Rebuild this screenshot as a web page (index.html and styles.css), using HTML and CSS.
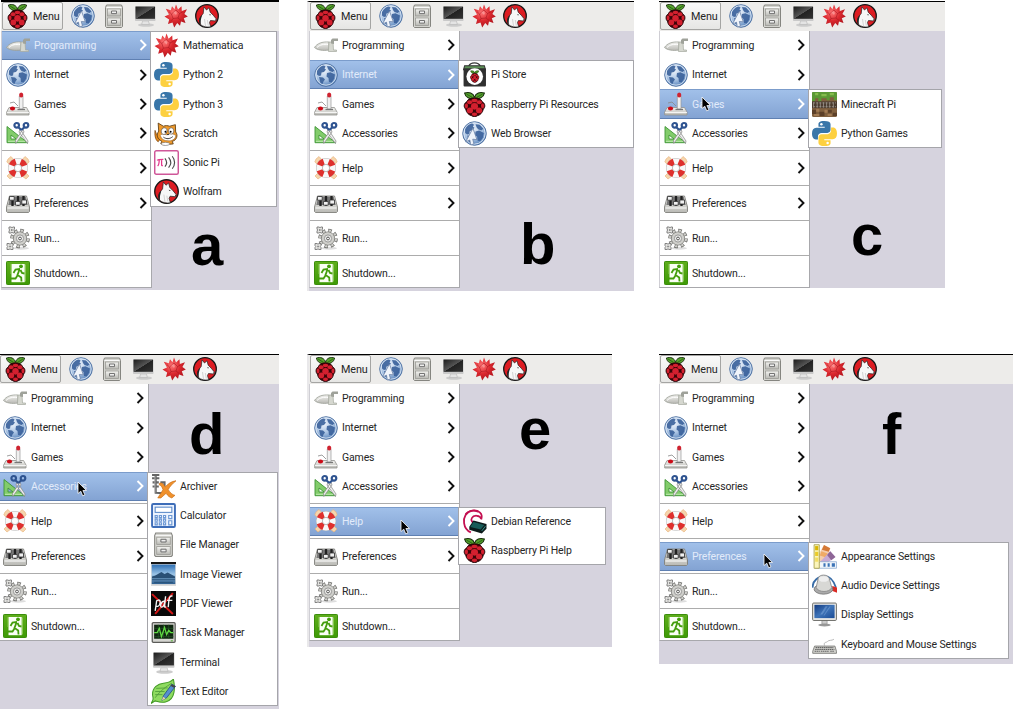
FILE: index.html
```html
<!DOCTYPE html>
<html lang="en">
<head>
<meta charset="utf-8">
<title>Raspberry Pi desktop menus</title>
<link rel="stylesheet" href="styles.css">
</head>
<body>
<svg class="sprite" aria-hidden="true">
<defs>
<radialGradient id="gGlobe" cx=".4" cy=".3" r=".7"><stop offset="0" stop-color="#f0f5fc"/><stop offset=".6" stop-color="#a9c3e3"/><stop offset="1" stop-color="#5c86bc"/></radialGradient>
<linearGradient id="gMetal" x2="0" y2="1"><stop offset="0" stop-color="#f4f4f1"/><stop offset="1" stop-color="#b9b9b4"/></linearGradient>
<linearGradient id="gScreen" x2="1" y2="1"><stop offset="0" stop-color="#1b1b1b"/><stop offset=".5" stop-color="#555"/><stop offset=".52" stop-color="#222"/><stop offset="1" stop-color="#333"/></linearGradient>
<linearGradient id="gBlue" x2="1" y2="1"><stop offset="0" stop-color="#123a80"/><stop offset=".5" stop-color="#3f74b8"/><stop offset="1" stop-color="#1b4c96"/></linearGradient>
<radialGradient id="gBurst" cx=".4" cy=".35" r=".7"><stop offset="0" stop-color="#f77"/><stop offset=".5" stop-color="#dc2a30"/><stop offset="1" stop-color="#a80f18"/></radialGradient>
<linearGradient id="gGreen" x2="0" y2="1"><stop offset="0" stop-color="#5fae1c"/><stop offset="1" stop-color="#3e9a06"/></linearGradient>
<linearGradient id="gSky" x2="0" y2="1"><stop offset="0" stop-color="#2d6fb4"/><stop offset=".5" stop-color="#9cc4e6"/><stop offset="1" stop-color="#2b5c8c"/></linearGradient>
<symbol id="raspberry" viewBox="1 0 22 23.5" preserveAspectRatio="none">
<path d="M12 6C8 7 4 5 3.300 1 7-.3 11 .8 12 5 13 .8 17-.3 20.700 1 20 5 16 7 12 6z" fill="#55a32c" stroke="#172b0c" stroke-width=".9"/>
<path d="M5 2l5 3M19 2l-5 3" stroke="#1f4d12" stroke-width=".7"/>
<path d="M12 5.500c3 0 6 1 7 4 2.500 1 2.700 5 .8 6.500-.5 3.500-3.300 6-5.300 6.300-1.500 1.300-3.500 1.300-5 0C7.500 22 4.700 19.500 4.200 16 2.300 14.500 2.500 10.500 5 9.500c1-3 4-4 7-4z" fill="#3a0408" stroke="#2a0508" stroke-width=".8"/>
<g fill="#d3202f"><ellipse cx="12" cy="8" rx="2.700" ry="1.700"/><ellipse cx="7.700" cy="9.600" rx="2.300" ry="1.900"/><ellipse cx="16.300" cy="9.600" rx="2.300" ry="1.900"/><circle cx="12" cy="13.500" r="3.100"/><ellipse cx="4.900" cy="13" rx="1.400" ry="2.400"/><ellipse cx="19.100" cy="13" rx="1.400" ry="2.400"/><circle cx="8" cy="17.300" r="2.700"/><circle cx="16" cy="17.300" r="2.700"/><ellipse cx="12" cy="20.900" rx="2.400" ry="1.600"/></g>
</symbol>
<symbol id="globe" viewBox="0 0 24 24">
<circle cx="12" cy="12" r="11.300" fill="url(#gGlobe)" stroke="#4a6d9f" stroke-width=".9"/>
<circle cx="12" cy="12" r="10.200" fill="none" stroke="#e4edf8" stroke-width=".8"/>
<path d="M3 8c2-4 5-5.500 7-5.500l1.500 1-1 2 1.500 1-2 2.500-2.500.5-.5 3-2 .5-2-1.500zM5 14l4 .5 2 2-1.500 2-1 2.500-2-1zM13 3l4 .5 3.500 4-2 1.500-3-1-1.500-2zM13 10l3.500-.8 4.500 2.300-1 4.500-2.500 3.500-2.500-.5-.5-4-2-1.500z" fill="#3a619a" opacity=".9"/>
</symbol>
<symbol id="browser" viewBox="0 0 24 24"><use href="#globe"/><path d="M10.500 7L3.500 20l4-1.800.8 4.800 3.200-1-1.200-4.500 4 .3z" fill="#f0f4fa" stroke="#6d84a8" stroke-width=".8"/></symbol>
<symbol id="cabinet" viewBox="0 0 24 24">
<path d="M4.500 1h15l1 2.500v19l-1 1h-15l-1-1v-19z" fill="#d4d4cf" stroke="#858580"/>
<path d="M4.500 3.500h15" stroke="#fafafa"/>
<rect x="5.500" y="5" width="13" height="7" fill="url(#gMetal)" stroke="#9b9b96" stroke-width=".8"/><rect x="5.500" y="14" width="13" height="7.500" fill="url(#gMetal)" stroke="#9b9b96" stroke-width=".8"/>
<path d="M9.500 7h5v2.600h-5zM9.500 16.500h5v2.600h-5z" fill="#eee" stroke="#666" stroke-width=".9"/>
</symbol>
<symbol id="monitor" viewBox="0 0 24 24">
<ellipse cx="13" cy="21" rx="8" ry="1.800" fill="#ccc"/><path d="M9.500 17h6l.8 3.500h-7.600z" fill="#e4e4e4" stroke="#b5b5b5" stroke-width=".6"/>
<rect x="2" y="2.500" width="20.500" height="14.500" rx=".8" fill="#c9c9c9"/><rect x="2.500" y="2.500" width="19.500" height="12.300" fill="url(#gScreen)"/>
</symbol>
<symbol id="burst" viewBox="0 0 24 24">
<path d="M12 .5l2 5 3.500-3.200.3 4.700 5.200-1.700-2.600 4.700 3.400 2.600-4 1.600 1.700 4.800-4.500-1.500-1 4.300-2.800-2.800-3 4.500-1.700-5-4.500 1.500 1.200-4.500L.5 12.500l4.500-2L1.800 4.700l5 1.500L8 2.300l2.500 3z" fill="url(#gBurst)"/>
<path d="M12 6l3.500 3.500L14 14l-5 .5L7.500 10zM15.500 9.500l3-1.500M14 14l3 2.400M9 14.500l-1.500 2.300M7.500 10L5 7.700" fill="none" stroke="#9e101b" stroke-width=".5"/><path d="M9.500 8.500l2-1.500 1.500 2-1 2z" fill="#fa9090"/>
</symbol>
<symbol id="wolf" viewBox="0 0 24 24">
<circle cx="12" cy="12" r="11.300" fill="#dd1c22" stroke="#181818" stroke-width="1.300"/>
<path d="M9 2.800L11.500 6 14 3.800l1.200 4.400 3 3 3.300 4-1 1.800-5-.5-1 2 1.200 4.300C12 23.500 8 22.800 5.500 20.500 4 17 5 13 8.200 9.500z" fill="#f7f7f7" stroke="#222" stroke-width=".7"/>
<path d="M5.500 20.500C2.800 17.500 4 13 7 11L5.800 16zM14 10.200l2.200.5-1.200.8zM20 15.200l1.500.2-.6 1.200z" fill="#252525"/><path d="M9.500 15l1 7M12.300 16l1 5.500" stroke="#bbb" stroke-width=".6"/>
</symbol>
<symbol id="programming" viewBox="0 0 24 24">
<path d="M.5 14.500C3 10.500 8 8.500 15 9v8c-6 1-12 0-14.500-2.500z" fill="url(#gMetal)" stroke="#9a9e95" stroke-width=".8"/><path d="M3 14.500c3-3 7-3.500 11-3" stroke="#fff" fill="none"/>
<path d="M15 9h4l.5 8h3v1.500h-8V17z" fill="#d6d8d0" stroke="#a5a99f" stroke-width=".7"/><path d="M17 10.500V7l1.500-1.500H24V8h-4v3z" fill="#9fa29a"/>
</symbol>
<symbol id="games" viewBox="0 0 24 24">
<path d="M3 15.500h17.500L23 20v3H.7v-3z" fill="url(#gMetal)" stroke="#92928e" stroke-width=".8"/><path d="M1 20.500h22" stroke="#fff" stroke-width=".8"/>
<path d="M13.300 17V4h3.700v13z" fill="#f0f0f0" stroke="#999" stroke-width=".7"/><ellipse cx="15.200" cy="3" rx="2.100" ry="2.600" fill="#cf2330"/><path d="M11.500 17.500h7.500" stroke="#777" stroke-width="1.300"/><ellipse cx="6.500" cy="16.500" rx="2.600" ry="1.900" fill="#cc0b17"/><path d="M4 11l4-1 4 4" fill="none" stroke="#888" stroke-width=".8"/>
</symbol>
<symbol id="accessories" viewBox="0 0 24 24">
<path d="M1 5.500v16.200h20.500zM5 14v4h5z" fill="#82cc6b" fill-rule="evenodd" stroke="#3e9436" stroke-width=".9"/><path d="M2 20.300h17" stroke="#bfeab0"/>
<path d="M14 8l8 12-.5 2.500L13 11zM17 8L9.500 19.500l.3 3L18 11z" fill="#eee" stroke="#858585" stroke-width=".7"/>
<g fill="none" stroke="#2e5390" stroke-width="2.200"><circle cx="10.700" cy="4.300" r="2.300"/><circle cx="20" cy="4.300" r="2.300"/><path d="M12 6l3.400 3M18.700 6l-3.400 3"/></g>
</symbol>
<symbol id="help" viewBox="0 0 24 24">
<path d="M2 3l3-2.500L20 17l3 3-3 3-4-3L.8 6zM22 3l-3-2.500L4 17l-3 3 3 3 4-3L23.200 6z" fill="#f6d5ac" stroke="#e7b279" stroke-width=".6"/>
<circle cx="12" cy="12" r="6.800" fill="#fff" stroke="#b9b9b9" stroke-width="6.600"/><circle cx="12" cy="12" r="6.800" fill="none" stroke="#f8f8f8" stroke-width="5.600"/>
<circle cx="12" cy="12" r="6.800" fill="none" stroke="#df302d" stroke-width="6" stroke-dasharray="5.700 4.980" stroke-dashoffset="-2.490"/><circle cx="12" cy="12" r="3.600" fill="#fff" stroke="#999" stroke-width=".6"/>
</symbol>
<symbol id="preferences" viewBox="0 0 24 24">
<path d="M3.500 5h17l3 11v4.500l-1 1h-21l-1-1V16z" fill="url(#gMetal)" stroke="#80807c" stroke-width=".9"/><path d="M4.300 5.500h15.400l2 8.500H2.300z" fill="#777"/>
<path d="M6.500 5v10M12 5v10M17.500 5v10" stroke="#202020" stroke-width="2.300"/><g fill="#f1f1f1" stroke="#333" stroke-width=".8"><path d="M3.500 5.500h4.700v3.700H3.500zM9.500 10.500h4.700v3.700H9.500zM15.800 9h4.700v4h-4.700z"/></g><path d="M1.500 17h21" stroke="#fff"/>
</symbol>
<symbol id="run" viewBox="0 0 24 24">
<ellipse cx="15" cy="22.300" rx="8" ry="1.500" fill="#ddd"/>
<circle cx="14" cy="12.500" r="8" fill="none" stroke="#6c6c69" stroke-width="3.600" stroke-dasharray="3.400 2.883"/><circle cx="14" cy="12.500" r="7.800" fill="none" stroke="#cfcfcb" stroke-width="2.600" stroke-dasharray="2.200 3.926" stroke-dashoffset="-.5"/>
<circle cx="14" cy="12.500" r="6.600" fill="#ccccc8" stroke="#747470" stroke-width=".8"/><circle cx="14" cy="12.500" r="6" fill="#cfcfcb"/><circle cx="14" cy="12.500" r="3.600" fill="#ececea" stroke="#888" stroke-width=".8"/><circle cx="14" cy="12.500" r="1.400" fill="#fff" stroke="#555"/>
<path d="M3 1h2l1 .7L7 1h1.500v2l-.7 1 .7 1v2H7l-1-.7L5 7H3V5l.7-1L3 3zM1 17.500h2l1 .7 1-.7h2v2l-.7 1 .7 1v2H5l-1-.7-1 .7H1v-2l.7-1-.7-1z" fill="#e2e2df" stroke="#777" stroke-width=".9"/><path d="M5 3.300h1.500v1.500H5zM3.300 19.700h1.500v1.500H3.300z" fill="#777"/>
</symbol>
<symbol id="shutdown" viewBox="0 0 24 24">
<rect x=".5" y=".5" width="23" height="23" rx=".8" fill="url(#gGreen)" stroke="#3b8d0b"/><path d="M5.500 3h13.200v18.200H5.500z" fill="#fafff5"/><path d="M5 3v10M19.500 3.500v17" stroke="#a1d66f" stroke-width=".7"/>
<circle cx="15" cy="5.300" r="1.900" fill="#439d0b"/><path d="M14 8l-4.500.5-2 3.500M13.500 8.500l-2 5.500 3.700 2.500.3 4M11.500 14.500l-2 3H4M14.500 9l1.500 3 2.500.5" fill="none" stroke="#439d0b" stroke-width="1.800"/>
</symbol>
<symbol id="python" viewBox="0 0 24 24">
<path d="M11.800 0C6.500 0 6.200 2 6.200 3v2.600h6v.9H4.100C1.500 6.500 0 8.500 0 12s1.500 5.700 3.700 5.700h2v-2.900c0-2 1.700-3.400 3.400-3.400h5.700c1.700 0 3-1.400 3-3V3c0-2-2-3-6-3z" fill="#3976a9"/>
<path d="M12.200 24c5.300 0 5.600-2 5.600-3v-2.600h-6v-.9h8.100c2.600 0 4.100-2 4.100-5.500s-1.500-5.700-3.700-5.700h-2v2.900c0 2-1.700 3.400-3.400 3.400H9.200c-1.700 0-3 1.400-3 3V21c0 2 2 3 6 3z" fill="#fdd040"/><circle cx="9" cy="3" r="1.200" fill="#fff"/><circle cx="15" cy="21" r="1.200" fill="#fff"/>
</symbol>
<symbol id="scratch" viewBox="0 0 24 24">
<path d="M4 20C1 18 .5 13 1 9l1.500 4L6 17z" fill="#e58a1e" stroke="#74410f" stroke-width=".7"/>
<path d="M4 2l5 3c2-.8 4-.7 6 0l5.500-1.500.3 7c2.500 3 1.200 8-3.300 9l1 2.500-9 .8-3-1 1-2.400c-4.500-2-5.500-6-3-9.700z" fill="#ef9a2c" stroke="#593810" stroke-width=".8"/>
<path d="M6 14c2-2.500 4-1 6.500-.7 3-1.800 6.500-1 8.500.7-.7 4-4 5.300-7.500 5C9.500 19 7 17.300 6 14z" fill="#fff" stroke="#8b5a23" stroke-width=".5"/><ellipse cx="9.700" cy="9.700" rx="2.800" ry="3.300" transform="rotate(15 9.700 9.700)" fill="#fff" stroke="#333" stroke-width=".5"/><ellipse cx="16.500" cy="9.500" rx="2.500" ry="3" fill="#fff" stroke="#333" stroke-width=".5"/><circle cx="11" cy="10.300" r=".9"/><circle cx="16" cy="10.300" r=".9"/><path d="M12.500 13h2M9 15.500c3 2 6 2 9-.5" fill="none" stroke="#333" stroke-width=".9"/><ellipse cx="11" cy="22" rx="4" ry="1.500" fill="#fff" stroke="#555" stroke-width=".5"/>
</symbol>
<symbol id="sonic" viewBox="0 0 24 24">
<rect x=".7" y=".7" width="22.600" height="22.600" rx="1.500" fill="#fff" stroke="#cf5799" stroke-width="1.400"/>
<path d="M3 10c.7-1 1.200-1 6-1M5 9.300c0 3-.3 5-1.500 6M7.300 9.300v5c0 .8.500.8 1.200.5" fill="none" stroke="#e4388c" stroke-width="1.200"/><path d="M10.500 8c2 2.500 2 5.500 0 8M14 7c2.500 3 2.500 7 0 10M17.500 6c3 3.500 3 8.500 0 12" fill="none" stroke="#4a4a4a" stroke-width="1.100"/>
</symbol>
<symbol id="store" viewBox="0 0 24 24">
<path d="M6.500 4C8-.3 16-.3 17.500 4" fill="none" stroke="#3b3b3b" stroke-width="1.200"/><path d="M2.500 3.500h19l1 4h-21z" fill="#5c8f56" stroke="#333"/><rect x="1.500" y="6" width="21.500" height="17.500" rx="1" fill="#303030"/><circle cx="12.200" cy="14" r="8" fill="#fff"/><use href="#raspberry" x="7.200" y="8" width="10" height="12"/>
</symbol>
<symbol id="minecraft" viewBox="0 0 24 24">
<rect width="24" height="24" rx="1.500" fill="#80603f"/><path d="M0 1q0-1 1-1h22q1 0 1 1v7h-3V5h-4v3h-3V6H9v3H6V6H3v3H0z" fill="#5b9935"/><path d="M3 1h3v2H3zM9 2h5v2H9zM17 1h4v2h-4z" fill="#85bc4d"/>
<path d="M0 17h4v4H0zM7 19h5v4H7zM15 17h4v3h-4zM20 20h4v3h-4z" fill="#5c4029"/><path d="M4 16h3v3H4zM12 17h3v3h-3zM2 21h5v2H2zM15 21h4v2h-4z" fill="#a27b54"/>
<path d="M0 9h24v6.500H0z" fill="#4b3c30"/><path d="M1 10.500h22M1 14h22" stroke="#837a70" stroke-width="1.200" stroke-dasharray="2 1"/><path d="M1.500 10v5M5 10v5M8 10v5M11 10v5M14 10v5M17 10v5M20.500 10v5" stroke="#9b938a" stroke-width=".8"/>
</symbol>
<symbol id="archiver" viewBox="0 0 24 24">
<path d="M1 1h7M4.500 1v18M1 4h7M1.500 8h6M4.500 18l7 .5M1.500 12h6M9 8h4v4" fill="none" stroke="#666" stroke-width="2"/><path d="M3.800 2v16" stroke="#bbb" stroke-width=".8"/>
<path d="M8 9c2-1 4 0 5.500 3.500C16 10 19 7 24 6.500c-3 2.500-6 5.500-7.500 8.500 2 3 4 5 6.500 5.500l-3 2.500c-2-.5-4-2-5.500-4.500L9.500 23H6.500c2-3 3.500-5.500 5-8C10.500 12 9.500 11 8 10.500z" fill="#f0912c" stroke="#c5680e" stroke-width=".6"/>
</symbol>
<symbol id="calculator" viewBox="0 0 24 24">
<rect x="1" y="1" width="22" height="22" rx="1.200" fill="#ecf3fe" stroke="#3d6db8" stroke-width="1.800"/><rect x="4" y="4" width="16" height="5" fill="#fff" stroke="#5787c8"/>
<g fill="#f8fbff" stroke="#6c98d4" stroke-width="1.100"><path d="M4 12h2v2H4zM8 12h2v2H8zM12 12h2v2h-2zM4 15.500h2v2H4zM8 15.500h2v2H8zM12 15.500h2v2h-2zM4 19h2v2H4zM8 19h2v2H8zM12 19h2v2h-2zM17 12h3v3h-3zM17 17h3v4h-3z"/></g>
</symbol>
<symbol id="image" viewBox="0 0 24 24">
<path d="M0 1.500h24V23H0z" fill="#dcdcdc"/><path d="M0 0h24v2H0z" fill="#151515"/><path d="M.7 2.500h22.600v18.700H.7z" fill="url(#gSky)"/><path d="M1 14c4-1 6-3 9-4.500l3 2 3-1.500 7 4v1.500H1z" fill="#2a4f74"/><path d="M1 17h22M3 19.500h18" stroke="#234a70" stroke-width=".8"/>
</symbol>
<symbol id="pdf" viewBox="0 0 24 24">
<path d="M0 0h24v24H0z" fill="#090909"/><path d="M1 3l20 19M21 2L4 22" stroke="#d31515" stroke-width="1.900"/>
<path d="M5.500 9l-1.500 10M5 10c3-3 5-.5 3 3.500-1 1.500-2.500 1.500-3.500.7M13.500 10c-4-1-5.500 6-3 5.500 2.200-.2 3-5 3.500-10.500l-1 10.300 1.500.2M16.500 15.500c.5-3.500.3-6 1.200-9 .6-1.500 1.600-2 3-1.500M15.500 9h5" fill="none" stroke="#f4f4f4" stroke-width="1.300"/>
</symbol>
<symbol id="task" viewBox="0 0 24 24">
<rect x="1.200" y="2.500" width="22" height="19" rx="1" fill="#d4d4d0" stroke="#5b5b58" stroke-width="1.200"/><path d="M3 4.500h18.500v13.500H3z" fill="#102511"/><path d="M3 8h18.500M3 12h18.500M3 16h18.500M7 4.500V18M12 4.500V18M17 4.500V18" stroke="#275c28" stroke-width=".6"/><path d="M3 12h3l2-4 2 8 3-9 2 7 2-4 2 2h2.500" fill="none" stroke="#5fda43" stroke-width="1.200"/><path d="M19 20h2" stroke="#55ad3a"/>
</symbol>
<symbol id="editor" viewBox="0 0 24 24">
<path d="M0 23.500c2-3 2.500-4 1.500-8C1 8 7 4.500 12 4c5-.5 8-2 9.500-4C23 7 24 20 14 22c-5 1-8-.5-10-1z" fill="#8fdb60" stroke="#429a25"/><path d="M4 18C9 11 15 7 20 4M5 9l11-.5M4 12h9M4 15h7" fill="none" stroke="#4d9a38" stroke-width=".8"/>
<path d="M20 5l3.500 2-8.500 11-4.500 2.500L12 16z" fill="#568fd0" stroke="#244e86" stroke-width=".8"/><path d="M20 5l3.500 2-1.200 1.600L18.700 6.500z" fill="#444"/><path d="M11.500 17l2.500 1.600-3.500 2z" fill="#edd5a2"/>
</symbol>
<symbol id="debian" viewBox="0 0 24 24">
<path d="M14 13c-4 1-6-2-4.500-4.500 1.700-3 8-2.700 9 1M18.500 10C20.500 4 15.500.8 10 1.500 4 2.500 1.200 8 2 13.500 2.600 18 5 21 8.500 22.500" fill="none" stroke="#c30f50" stroke-width="1.700"/><path d="M3.500 5c3-3.500 8-4.200 12-2.500" fill="none" stroke="#c30f50" stroke-width="1.800"/>
<path d="M7 17l4-6 12.500 3.500V19L19 23.500 7 20z" fill="#0c1b1b"/><path d="M11 12.500l10.500 2.800-3.500 4.500-10-2.600z" fill="#185c58"/><path d="M19 21l3.500-4.500" stroke="#40a8a0" stroke-width=".8"/>
</symbol>
<symbol id="appearance" viewBox="0 0 24 24">
<path d="M4 14L11.500 1l6 3-5 17z" fill="#f4cdad"/><path d="M11.500 1l6 3-1.500 3.500-6.500-2z" fill="#d57936"/><path d="M9 7l6 2-1.500 4-6-2z" fill="#efaa66"/><path d="M17.500 7l5 5.500L9 22 7 18z" fill="#c8aad4"/><path d="M17.500 7l5 5.500-4 3-4-5z" fill="#8e6697"/><path d="M8 17h15.500v6.300H3V21z" fill="#f2f6fb" stroke="#86a6cd" stroke-width=".7"/><path d="M11 18.500h2v3.300h-2zM15 18.500h2v3.300h-2zM19 18.500h3v3.300h-3z" fill="#3b73b7"/>
<path d="M2 .7h5v22.600H2z" fill="#fbf5ba" stroke="#a69e45" stroke-width=".8"/><path d="M3 2h3v4H3z" fill="#d9b500"/><path d="M3 7.500h3v4H3z" fill="#eacb29"/><path d="M3 13h3v4H3z" fill="#f2dd60"/>
</symbol>
<symbol id="audio" viewBox="0 0 24 24">
<path d="M.8 14C0 8 6 3 12 3c6 0 9 5 11 11" fill="none" stroke="#386ca7" stroke-width="1.700"/><path d="M19.500 12.500l4.500 1.500v5l-5-2z" fill="#d92b24"/><ellipse cx="11" cy="15.500" rx="9" ry="4.800" fill="#aaa" stroke="#777" stroke-width=".8"/><path d="M4 14L6 5c1-4 9-4 10.500 0L19 14c-2 5-13 5-15 0z" fill="#d8d8d5" stroke="#888" stroke-width=".8"/><ellipse cx="11.200" cy="5.700" rx="4.700" ry="2.700" fill="#eee"/>
</symbol>
<symbol id="display" viewBox="0 0 24 24">
<ellipse cx="12" cy="22" rx="6" ry="1.400" fill="#999"/><path d="M9.500 17h5v4h-5z" fill="#ccc" stroke="#888" stroke-width=".6"/><rect x=".6" y="1" width="22.800" height="16.700" rx="1" fill="#ecece9" stroke="#64645f" stroke-width=".9"/><path d="M2.300 2.700h19.400v12.800H2.300z" fill="url(#gBlue)"/><path d="M13 4L8 12h2l5-8zM17 4l-6 9h1l6-9z" fill="#91b6e4" opacity=".4"/>
</symbol>
<symbol id="keyboard" viewBox="0 0 24 24">
<path d="M12 13c-1-4 2-2.500 3-4s4-.5 6-2" fill="none" stroke="#aaa" stroke-width=".8"/><path d="M2.500 13.500H22l1.500 5v2H.7v-2z" fill="#cfcfca" stroke="#777773" stroke-width=".8"/><path d="M3.500 15h17M3 16.700h18.500M2.500 18.400h5M8.500 18.400h8M17.500 18.400h4" stroke="#666" stroke-width="1" stroke-dasharray="1.500 .5"/>
</symbol>
<symbol id="chevron" viewBox="0 0 8 12"><path d="M1.500 1l5 5-5 5" fill="none" stroke="currentColor" stroke-width="1.900"/></symbol>
<symbol id="pointer" viewBox="0 0 10 16"><path d="M1 1v11.500l2.800-2.300 1.900 4.600 2.200-1-2-4.300h3.500z" fill="#000" stroke="#fff" stroke-width=".8"/></symbol>
</defs>
</svg>

<main class="figure">
<section class="panel panel-a">
<header class="taskbar"><button class="menu-button"><svg><use href="#raspberry"/></svg>Menu</button><svg class="launcher"><use href="#browser"/></svg><svg class="launcher"><use href="#cabinet"/></svg><svg class="launcher"><use href="#monitor"/></svg><svg class="launcher"><use href="#burst"/></svg><svg class="launcher"><use href="#wolf"/></svg></header>
<ul class="menu">
<li class="item active"><svg class="icon"><use href="#programming"/></svg><span>Programming</span><svg class="arrow"><use href="#chevron"/></svg>
<ul class="submenu">
<li class="item"><svg class="icon"><use href="#burst"/></svg><span>Mathematica</span></li>
<li class="item"><svg class="icon"><use href="#python"/></svg><span>Python 2</span></li>
<li class="item"><svg class="icon"><use href="#python"/></svg><span>Python 3</span></li>
<li class="item"><svg class="icon"><use href="#scratch"/></svg><span>Scratch</span></li>
<li class="item"><svg class="icon"><use href="#sonic"/></svg><span>Sonic Pi</span></li>
<li class="item"><svg class="icon"><use href="#wolf"/></svg><span>Wolfram</span></li>
</ul></li>
<li class="item"><svg class="icon"><use href="#globe"/></svg><span>Internet</span><svg class="arrow"><use href="#chevron"/></svg></li>
<li class="item"><svg class="icon"><use href="#games"/></svg><span>Games</span><svg class="arrow"><use href="#chevron"/></svg></li>
<li class="item"><svg class="icon"><use href="#accessories"/></svg><span>Accessories</span><svg class="arrow"><use href="#chevron"/></svg></li>
<li class="rule"></li>
<li class="item"><svg class="icon"><use href="#help"/></svg><span>Help</span><svg class="arrow"><use href="#chevron"/></svg></li>
<li class="rule"></li>
<li class="item"><svg class="icon"><use href="#preferences"/></svg><span>Preferences</span><svg class="arrow"><use href="#chevron"/></svg></li>
<li class="rule"></li>
<li class="item"><svg class="icon"><use href="#run"/></svg><span>Run...</span></li>
<li class="rule"></li>
<li class="item"><svg class="icon"><use href="#shutdown"/></svg><span>Shutdown...</span></li>
</ul>
<b class="label">a</b>
</section>

<section class="panel panel-b">
<header class="taskbar"><button class="menu-button"><svg><use href="#raspberry"/></svg>Menu</button><svg class="launcher"><use href="#browser"/></svg><svg class="launcher"><use href="#cabinet"/></svg><svg class="launcher"><use href="#monitor"/></svg><svg class="launcher"><use href="#burst"/></svg><svg class="launcher"><use href="#wolf"/></svg></header>
<ul class="menu">
<li class="item"><svg class="icon"><use href="#programming"/></svg><span>Programming</span><svg class="arrow"><use href="#chevron"/></svg></li>
<li class="item active"><svg class="icon"><use href="#globe"/></svg><span>Internet</span><svg class="arrow"><use href="#chevron"/></svg>
<ul class="submenu">
<li class="item"><svg class="icon"><use href="#store"/></svg><span>Pi Store</span></li>
<li class="item"><svg class="icon"><use href="#raspberry"/></svg><span>Raspberry Pi Resources</span></li>
<li class="item"><svg class="icon"><use href="#browser"/></svg><span>Web Browser</span></li>
</ul></li>
<li class="item"><svg class="icon"><use href="#games"/></svg><span>Games</span><svg class="arrow"><use href="#chevron"/></svg></li>
<li class="item"><svg class="icon"><use href="#accessories"/></svg><span>Accessories</span><svg class="arrow"><use href="#chevron"/></svg></li>
<li class="rule"></li>
<li class="item"><svg class="icon"><use href="#help"/></svg><span>Help</span><svg class="arrow"><use href="#chevron"/></svg></li>
<li class="rule"></li>
<li class="item"><svg class="icon"><use href="#preferences"/></svg><span>Preferences</span><svg class="arrow"><use href="#chevron"/></svg></li>
<li class="rule"></li>
<li class="item"><svg class="icon"><use href="#run"/></svg><span>Run...</span></li>
<li class="rule"></li>
<li class="item"><svg class="icon"><use href="#shutdown"/></svg><span>Shutdown...</span></li>
</ul>
<b class="label">b</b>
</section>

<section class="panel panel-c">
<header class="taskbar"><button class="menu-button"><svg><use href="#raspberry"/></svg>Menu</button><svg class="launcher"><use href="#browser"/></svg><svg class="launcher"><use href="#cabinet"/></svg><svg class="launcher"><use href="#monitor"/></svg><svg class="launcher"><use href="#burst"/></svg><svg class="launcher"><use href="#wolf"/></svg></header>
<ul class="menu">
<li class="item"><svg class="icon"><use href="#programming"/></svg><span>Programming</span><svg class="arrow"><use href="#chevron"/></svg></li>
<li class="item"><svg class="icon"><use href="#globe"/></svg><span>Internet</span><svg class="arrow"><use href="#chevron"/></svg></li>
<li class="item active"><svg class="icon"><use href="#games"/></svg><span>Games</span><svg class="arrow"><use href="#chevron"/></svg><svg class="pointer"><use href="#pointer"/></svg>
<ul class="submenu">
<li class="item"><svg class="icon"><use href="#minecraft"/></svg><span>Minecraft Pi</span></li>
<li class="item"><svg class="icon"><use href="#python"/></svg><span>Python Games</span></li>
</ul></li>
<li class="item"><svg class="icon"><use href="#accessories"/></svg><span>Accessories</span><svg class="arrow"><use href="#chevron"/></svg></li>
<li class="rule"></li>
<li class="item"><svg class="icon"><use href="#help"/></svg><span>Help</span><svg class="arrow"><use href="#chevron"/></svg></li>
<li class="rule"></li>
<li class="item"><svg class="icon"><use href="#preferences"/></svg><span>Preferences</span><svg class="arrow"><use href="#chevron"/></svg></li>
<li class="rule"></li>
<li class="item"><svg class="icon"><use href="#run"/></svg><span>Run...</span></li>
<li class="rule"></li>
<li class="item"><svg class="icon"><use href="#shutdown"/></svg><span>Shutdown...</span></li>
</ul>
<b class="label">c</b>
</section>

<section class="panel panel-d">
<header class="taskbar"><button class="menu-button"><svg><use href="#raspberry"/></svg>Menu</button><svg class="launcher"><use href="#browser"/></svg><svg class="launcher"><use href="#cabinet"/></svg><svg class="launcher"><use href="#monitor"/></svg><svg class="launcher"><use href="#burst"/></svg><svg class="launcher"><use href="#wolf"/></svg></header>
<ul class="menu">
<li class="item"><svg class="icon"><use href="#programming"/></svg><span>Programming</span><svg class="arrow"><use href="#chevron"/></svg></li>
<li class="item"><svg class="icon"><use href="#globe"/></svg><span>Internet</span><svg class="arrow"><use href="#chevron"/></svg></li>
<li class="item"><svg class="icon"><use href="#games"/></svg><span>Games</span><svg class="arrow"><use href="#chevron"/></svg></li>
<li class="item active"><svg class="icon"><use href="#accessories"/></svg><span>Accessories</span><svg class="arrow"><use href="#chevron"/></svg><svg class="pointer"><use href="#pointer"/></svg>
<ul class="submenu">
<li class="item"><svg class="icon"><use href="#archiver"/></svg><span>Archiver</span></li>
<li class="item"><svg class="icon"><use href="#calculator"/></svg><span>Calculator</span></li>
<li class="item"><svg class="icon"><use href="#cabinet"/></svg><span>File Manager</span></li>
<li class="item"><svg class="icon"><use href="#image"/></svg><span>Image Viewer</span></li>
<li class="item"><svg class="icon"><use href="#pdf"/></svg><span>PDF Viewer</span></li>
<li class="item"><svg class="icon"><use href="#task"/></svg><span>Task Manager</span></li>
<li class="item"><svg class="icon"><use href="#monitor"/></svg><span>Terminal</span></li>
<li class="item"><svg class="icon"><use href="#editor"/></svg><span>Text Editor</span></li>
</ul></li>
<li class="rule"></li>
<li class="item"><svg class="icon"><use href="#help"/></svg><span>Help</span><svg class="arrow"><use href="#chevron"/></svg></li>
<li class="rule"></li>
<li class="item"><svg class="icon"><use href="#preferences"/></svg><span>Preferences</span><svg class="arrow"><use href="#chevron"/></svg></li>
<li class="rule"></li>
<li class="item"><svg class="icon"><use href="#run"/></svg><span>Run...</span></li>
<li class="rule"></li>
<li class="item"><svg class="icon"><use href="#shutdown"/></svg><span>Shutdown...</span></li>
</ul>
<b class="label">d</b>
</section>

<section class="panel panel-e">
<header class="taskbar"><button class="menu-button"><svg><use href="#raspberry"/></svg>Menu</button><svg class="launcher"><use href="#browser"/></svg><svg class="launcher"><use href="#cabinet"/></svg><svg class="launcher"><use href="#monitor"/></svg><svg class="launcher"><use href="#burst"/></svg><svg class="launcher"><use href="#wolf"/></svg></header>
<ul class="menu">
<li class="item"><svg class="icon"><use href="#programming"/></svg><span>Programming</span><svg class="arrow"><use href="#chevron"/></svg></li>
<li class="item"><svg class="icon"><use href="#globe"/></svg><span>Internet</span><svg class="arrow"><use href="#chevron"/></svg></li>
<li class="item"><svg class="icon"><use href="#games"/></svg><span>Games</span><svg class="arrow"><use href="#chevron"/></svg></li>
<li class="item"><svg class="icon"><use href="#accessories"/></svg><span>Accessories</span><svg class="arrow"><use href="#chevron"/></svg></li>
<li class="rule"></li>
<li class="item active"><svg class="icon"><use href="#help"/></svg><span>Help</span><svg class="arrow"><use href="#chevron"/></svg><svg class="pointer"><use href="#pointer"/></svg>
<ul class="submenu">
<li class="item"><svg class="icon"><use href="#debian"/></svg><span>Debian Reference</span></li>
<li class="item"><svg class="icon"><use href="#raspberry"/></svg><span>Raspberry Pi Help</span></li>
</ul></li>
<li class="rule"></li>
<li class="item"><svg class="icon"><use href="#preferences"/></svg><span>Preferences</span><svg class="arrow"><use href="#chevron"/></svg></li>
<li class="rule"></li>
<li class="item"><svg class="icon"><use href="#run"/></svg><span>Run...</span></li>
<li class="rule"></li>
<li class="item"><svg class="icon"><use href="#shutdown"/></svg><span>Shutdown...</span></li>
</ul>
<b class="label">e</b>
</section>

<section class="panel panel-f">
<header class="taskbar"><button class="menu-button"><svg><use href="#raspberry"/></svg>Menu</button><svg class="launcher"><use href="#browser"/></svg><svg class="launcher"><use href="#cabinet"/></svg><svg class="launcher"><use href="#monitor"/></svg><svg class="launcher"><use href="#burst"/></svg><svg class="launcher"><use href="#wolf"/></svg></header>
<ul class="menu">
<li class="item"><svg class="icon"><use href="#programming"/></svg><span>Programming</span><svg class="arrow"><use href="#chevron"/></svg></li>
<li class="item"><svg class="icon"><use href="#globe"/></svg><span>Internet</span><svg class="arrow"><use href="#chevron"/></svg></li>
<li class="item"><svg class="icon"><use href="#games"/></svg><span>Games</span><svg class="arrow"><use href="#chevron"/></svg></li>
<li class="item"><svg class="icon"><use href="#accessories"/></svg><span>Accessories</span><svg class="arrow"><use href="#chevron"/></svg></li>
<li class="rule"></li>
<li class="item"><svg class="icon"><use href="#help"/></svg><span>Help</span><svg class="arrow"><use href="#chevron"/></svg></li>
<li class="rule"></li>
<li class="item active"><svg class="icon"><use href="#preferences"/></svg><span>Preferences</span><svg class="arrow"><use href="#chevron"/></svg><svg class="pointer"><use href="#pointer"/></svg>
<ul class="submenu">
<li class="item"><svg class="icon"><use href="#appearance"/></svg><span>Appearance Settings</span></li>
<li class="item"><svg class="icon"><use href="#audio"/></svg><span>Audio Device Settings</span></li>
<li class="item"><svg class="icon"><use href="#display"/></svg><span>Display Settings</span></li>
<li class="item"><svg class="icon"><use href="#keyboard"/></svg><span>Keyboard and Mouse Settings</span></li>
</ul></li>
<li class="rule"></li>
<li class="item"><svg class="icon"><use href="#run"/></svg><span>Run...</span></li>
<li class="rule"></li>
<li class="item"><svg class="icon"><use href="#shutdown"/></svg><span>Shutdown...</span></li>
</ul>
<b class="label">f</b>
</section>
</main>
</body>
</html>
```

FILE: styles.css
```css
* { box-sizing: border-box; }
body { margin: 0; background: #fff; font-family: Roboto, "Liberation Sans", sans-serif; font-size: 10.5px; letter-spacing: -.14px; color: #262626; }
.sprite { position: absolute; width: 0; height: 0; }
.figure { display: grid; grid-template-columns: 307px 352px 367px; grid-template-rows: 354px 362px; align-items: start; width: 1026px; height: 716px; overflow: hidden; }

.panel { position: relative; background: #d6d3de; border-top: 1px solid #000; --indent: 0px; }
.panel-a { margin-left: 1px; width: 278px; height: 290px; border-top-width: 2px; }
.panel-b { margin-top: 1px; width: 327px; height: 290px; border-left: 2px solid #e9e8ea; }
.panel-c { margin-top: 1px; width: 286px; height: 287px; }
.panel-d { width: 279px; height: 355px; --indent: -2px; }
.panel-e { width: 305px; height: 293px; border-left: 2px solid #e9e8ea; }
.panel-f { width: 354px; height: 310px; }

.taskbar { display: flex; align-items: center; height: 28.700px; padding: 0 0 0 calc(var(--indent) + 1px); background: #edecea; }
.menu-button { display: flex; align-items: center; gap: 4px; flex: none; width: 60.500px; height: 28px; margin: 0 8px 0 0; padding: 0 0 0 3px; border: 1px solid #a5a5a3; border-radius: 2px; background: linear-gradient(#fafafa, #e6e6e4); font: inherit; font-size: 10.800px; letter-spacing: -.1px; color: #262626; }
.menu-button svg { flex: none; width: 23px; height: 25px; }
.launcher { flex: none; width: 24px; height: 24px; margin-right: 7px; }

.menu, .submenu { margin: 0; padding: 0; list-style: none; background: #fff; }
.menu { width: 151px; height: 257px; margin-left: var(--indent); border-right: 1px solid #a8a8ac; border-bottom: 1px solid #a8a8ac; border-left: 1px solid #cfced4; }
.item { position: relative; display: flex; align-items: center; height: 29.330px; padding: 0 4px; }
.item span { margin-left: 4px; white-space: nowrap; }
.icon { flex: none; width: 24px; height: 24px; }
.arrow { width: 8px; height: 12px; margin-left: auto; color: #111; }
.rule { height: 1.010px; margin: 2.330px 0; border-top: 1px solid #acacac; }
.active { background: linear-gradient(#a2c1ea, #82a2d2); box-shadow: inset 0 1px #7b9ccb, inset 0 -1px #5f80b2; color: #e2ebfa; }
.active > .arrow { color: #fff; }

.submenu { position: absolute; z-index: 2; top: 0; left: 148px; border: 1px solid #a5a5aa; color: #262626; }
.submenu .item { padding-left: 3px; }
.submenu .icon { width: 25px; height: 25px; }
.submenu .item:first-child { margin-top: -1px; }
.submenu .item:last-child { margin-bottom: -1px; }
.panel-a .submenu { width: 127px; }
.panel-b .submenu { width: 176px; }
.panel-c .submenu { width: 134px; }
.panel-d .submenu { width: 131px; }
.panel-e .submenu { width: 148px; }
.panel-f .submenu { width: 201px; }

.pointer { position: absolute; z-index: 3; width: 10px; height: 16px; }
.panel-c .pointer { left: 41px; top: 7px; }
.panel-d .pointer { left: 78px; top: 9px; }
.panel-e .pointer { left: 90px; top: 12px; }
.panel-f .pointer { left: 103px; top: 11px; }

.label { position: absolute; font: bold 58px/60px "Liberation Sans", Arial, sans-serif; letter-spacing: 0; color: #000; }
.panel-a .label { left: 190px; top: 213px; }
.panel-b .label { left: 211px; top: 211.500px; }
.panel-c .label { left: 192px; top: 202.500px; }
.panel-d .label { left: 189px; top: 48.500px; }
.panel-e .label { left: 210px; top: 43.500px; }
.panel-f .label { left: 223px; top: 48.500px; }
```
